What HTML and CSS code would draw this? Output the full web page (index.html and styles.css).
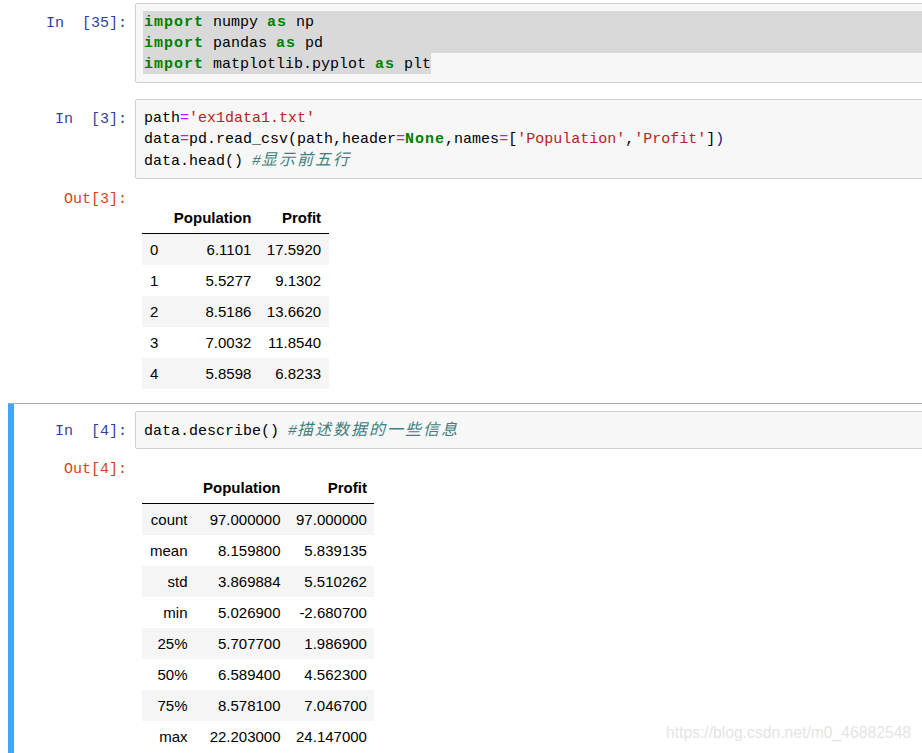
FILE: index.html
```html
<!DOCTYPE html>
<html lang="zh">
<head>
<meta charset="utf-8">
<title>Notebook</title>
<link rel="stylesheet" href="styles.css">
</head>
<body>
<div class="notebook">
  <div class="cell">
    <div class="row">
      <div class="prompt in">In  [35]:</div>
      <div class="code">
        <div class="line full"><span class="kw">import</span> numpy <span class="kw">as</span> np</div>
        <div class="line full"><span class="kw">import</span> pandas <span class="kw">as</span> pd</div>
        <div class="line part"><span class="kw">import</span> matplotlib.pyplot <span class="kw">as</span> plt</div>
      </div>
    </div>
  </div>

  <div class="cell">
    <div class="row">
      <div class="prompt in">In  [3]:</div>
      <div class="code">
        <div class="line">path<span class="op">=</span><span class="str">'ex1data1.txt'</span></div>
        <div class="line">data<span class="op">=</span>pd.read_csv(path,header<span class="op">=</span><span class="kw">None</span>,names<span class="op">=</span>[<span class="str">'Population'</span>,<span class="str">'Profit'</span>]<span class="match">)</span></div>
        <div class="line">data.head() <span class="cm">#<span class="cjk">显示前五行</span></span></div>
      </div>
    </div>
    <div class="row">
      <div class="prompt out">Out[3]:</div>
      <div class="output">
        <table class="df">
          <thead>
            <tr><th></th><th>Population</th><th>Profit</th></tr>
          </thead>
          <tbody>
            <tr><th>0</th><td>6.1101</td><td>17.5920</td></tr>
            <tr><th>1</th><td>5.5277</td><td>9.1302</td></tr>
            <tr><th>2</th><td>8.5186</td><td>13.6620</td></tr>
            <tr><th>3</th><td>7.0032</td><td>11.8540</td></tr>
            <tr><th>4</th><td>5.8598</td><td>6.8233</td></tr>
          </tbody>
        </table>
      </div>
    </div>
  </div>

  <div class="cell selected">
    <div class="row">
      <div class="prompt in">In  [4]:</div>
      <div class="code">
        <div class="line">data.describe() <span class="cm">#<span class="cjk">描述数据的一些信息</span></span></div>
      </div>
    </div>
    <div class="row">
      <div class="prompt out">Out[4]:</div>
      <div class="output">
        <table class="df">
          <thead>
            <tr><th></th><th>Population</th><th>Profit</th></tr>
          </thead>
          <tbody>
            <tr><th>count</th><td>97.000000</td><td>97.000000</td></tr>
            <tr><th>mean</th><td>8.159800</td><td>5.839135</td></tr>
            <tr><th>std</th><td>3.869884</td><td>5.510262</td></tr>
            <tr><th>min</th><td>5.026900</td><td>-2.680700</td></tr>
            <tr><th>25%</th><td>5.707700</td><td>1.986900</td></tr>
            <tr><th>50%</th><td>6.589400</td><td>4.562300</td></tr>
            <tr><th>75%</th><td>8.578100</td><td>7.046700</td></tr>
            <tr><th>max</th><td>22.203000</td><td>24.147000</td></tr>
          </tbody>
        </table>
      </div>
    </div>
  </div>
</div>
<div class="watermark">https://blog.csdn.net/m0_46882548</div>
</body>
</html>
```

FILE: styles.css
```css
html, body {
  margin: 0;
  padding: 0;
  background: #ffffff;
}

body {
  width: 922px;
  height: 753px;
  overflow: hidden;
  position: relative;
  font-family: "Liberation Sans", Arial, sans-serif;
}

.notebook {
  width: 960px;
  margin-top: -5px;
  padding-left: 8px;
}

.cell {
  border-top: 1px solid transparent;
  border-bottom: 1px solid transparent;
  padding: 7px 0 7px 6px;
}

.cell.selected {
  border-top-color: #ababab;
  background: linear-gradient(#42a5f5, #42a5f5) no-repeat left top / 6px 100%;
}

.row {
  display: flex;
  align-items: flex-start;
}

.prompt {
  flex: 0 0 121px;
  box-sizing: border-box;
  padding: 11px 8px 0 0;
  text-align: right;
  font-family: "Liberation Mono", "DejaVu Sans Mono", monospace;
  font-size: 15px;
  line-height: 19px;
  white-space: pre;
}

.prompt.in { color: #303f9f; }
.prompt.out { color: #d84315; }

.code {
  flex: 1;
  background: #f7f7f7;
  border: 1px solid #cfcfcf;
  border-radius: 2px;
  padding: 7px 0 8px 7px;
  font-family: "Liberation Mono", "DejaVu Sans Mono", monospace;
  font-size: 15px;
  color: #000000;
}

.line {
  white-space: pre;
  box-sizing: border-box;
  height: 21px;
  padding: 3px 0 0 1px;
  line-height: 18px;
}

.line.full { background: #d9d9d9; }
.line.part { display: table; background: #d9d9d9; }

.kw {
  color: #008000;
  font-weight: bold;
  letter-spacing: 1px;
}

.op { color: #aa22ff; }
.str { color: #ba2121; }
.match { color: #1a1a80; }

.cm {
  color: #408080;
  font-style: italic;
}

.cjk {
  font-family: "Noto Sans CJK SC", sans-serif;
  font-size: 16px;
  letter-spacing: 2px;
  line-height: 12px;
}

.output {
  flex: 1;
  padding: 23px 0 6px 7px;
}

.df {
  border-collapse: separate;
  border-spacing: 0;
  font-family: "Liberation Sans", Arial, sans-serif;
  font-size: 15px;
  color: #000000;
}

.df th, .df td {
  padding: 7px 7.5px 7px 8px;
  line-height: 17px;
  text-align: right;
  font-weight: normal;
  white-space: nowrap;
}

.df thead th {
  font-weight: bold;
  border-bottom: 1px solid #000000;
}

.df tbody tr:nth-child(odd) {
  background: #f5f5f5;
}

.watermark {
  position: absolute;
  left: 666px;
  top: 724px;
  font-family: "Liberation Sans", Arial, sans-serif;
  font-size: 15.7px;
  line-height: 18px;
  color: #e4e4e4;
  white-space: nowrap;
}
```
